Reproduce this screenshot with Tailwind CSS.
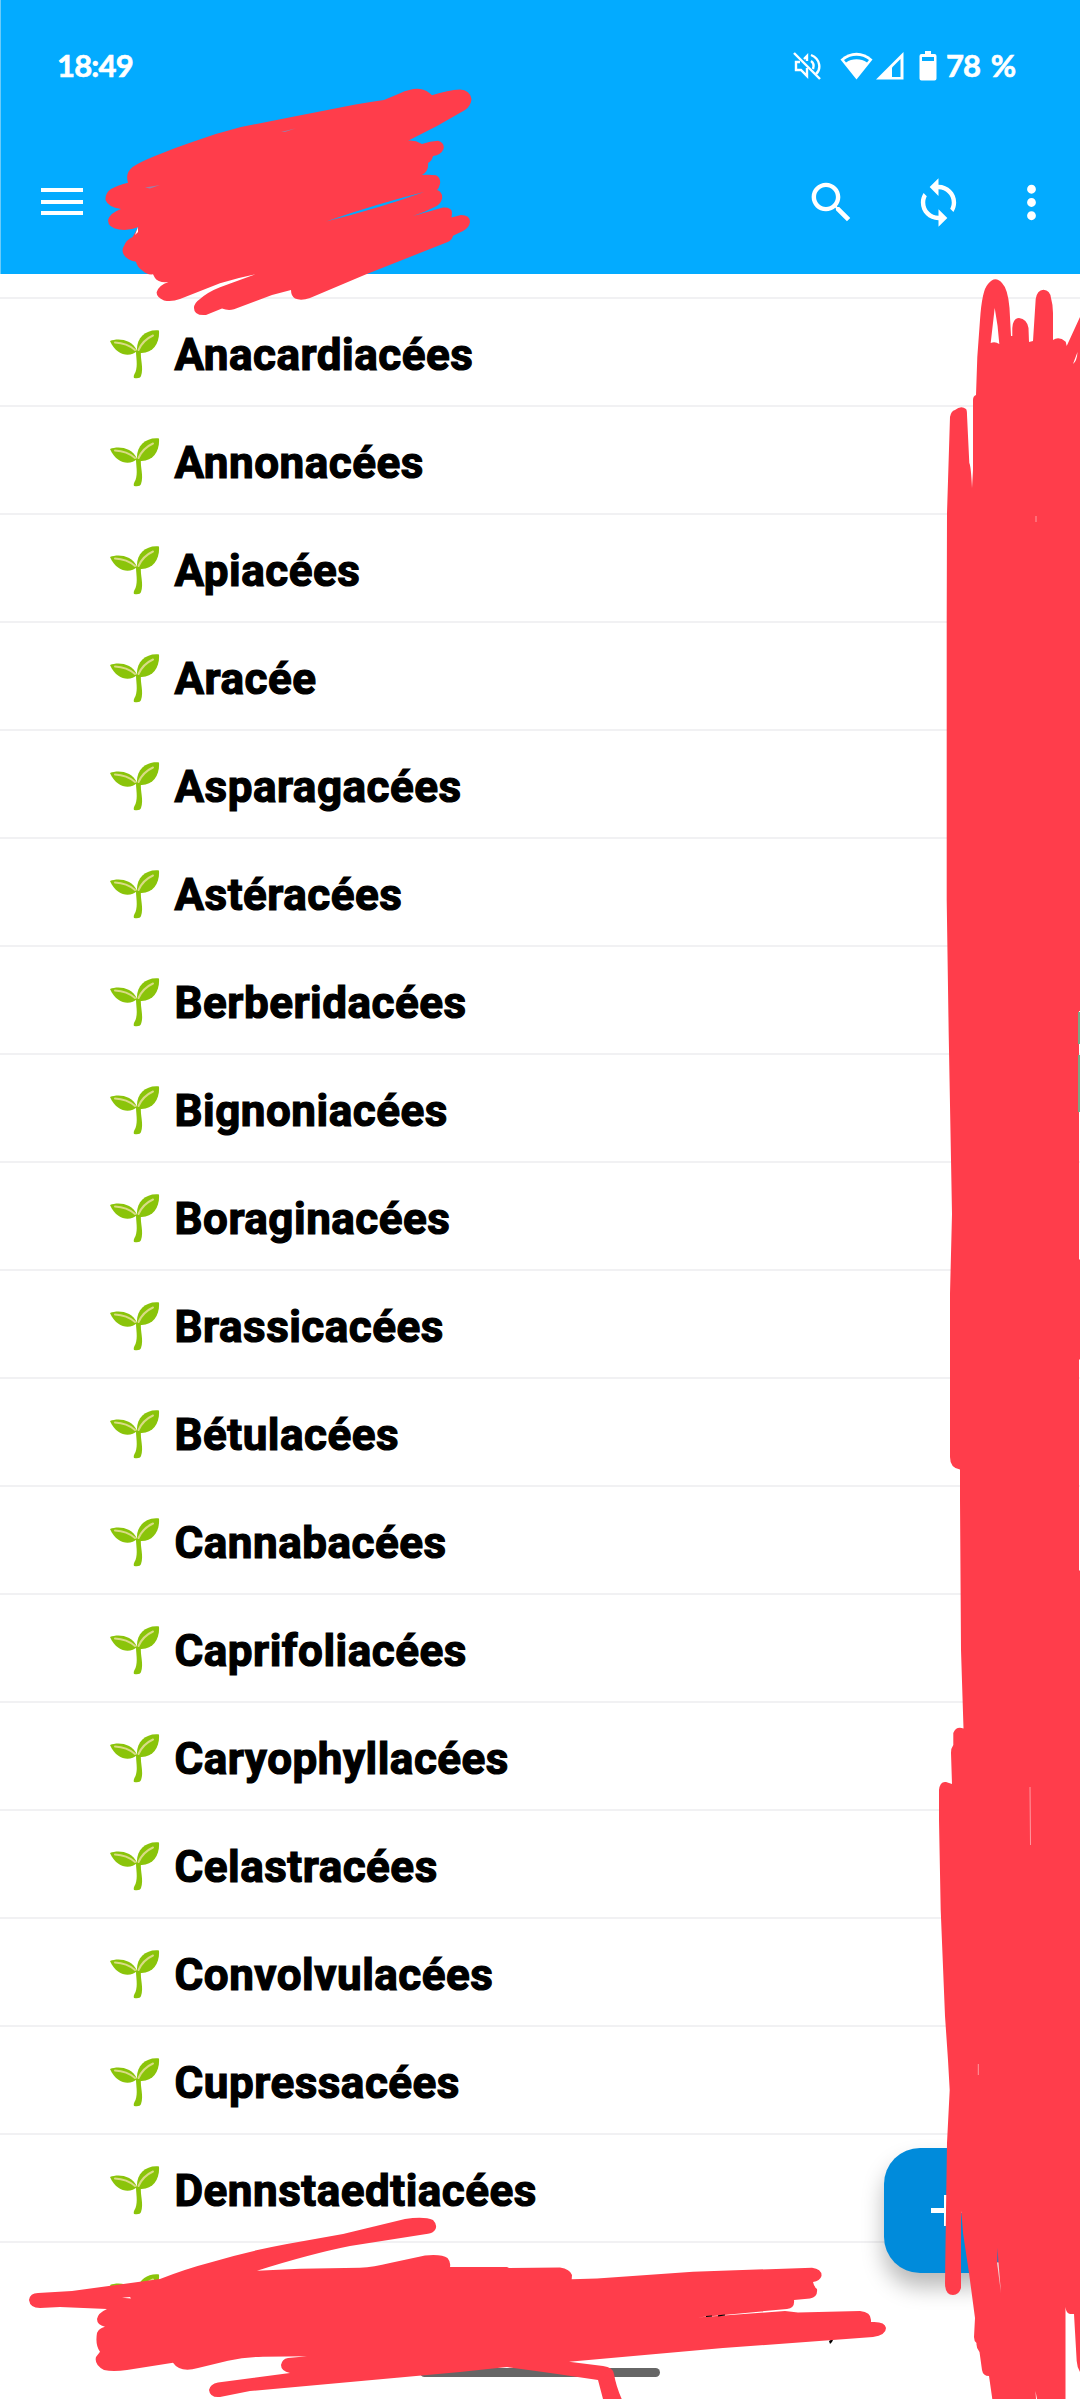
<!DOCTYPE html>
<html lang="fr">
<head>
  <meta charset="UTF-8" />
  <meta name="viewport" content="width=device-width, initial-scale=1" />
  <title>Familles</title>
  <script src="https://cdn.jsdelivr.net/npm/@tailwindcss/browser@4"></script>
</head>
<body class="bg-white">
  <div class="relative w-[1080px] h-[2399px] overflow-hidden bg-white flex flex-col font-[Roboto,sans-serif]">

    <header class="h-[274px] shrink-0 bg-[#03abff] text-white border-l border-[#6ccbf8] flex flex-col">
      <!-- Status bar -->
      <div class="h-[132px] pl-[56px] pr-[66px] flex items-center justify-between font-[Lato,sans-serif] font-bold text-[31px] leading-none">
        <span class="tracking-[-0.8px] -mt-[2px] [-webkit-text-stroke:0.6px_white]">18:49</span>
        <div class="flex items-center">
          <svg class="w-[28px] h-[28px] mr-[19px]" viewBox="0 0 28 28" fill="none" stroke="#fff" stroke-width="2.4">
            <path d="M1 1 L27 27" />
            <path d="M7 10 H3 V18 H8 L14 24 V16" />
            <path d="M11 7 L14 4 V9" />
            <path d="M18 3 C28 7 28 18 23 22" />
            <path d="M18 9 C21 11 21 14 20 17" />
          </svg>
          <svg class="w-[33px] h-[28px] mr-[3px]" viewBox="0 0 33 28">
            <path d="M16.500 27.500 L0.500 7.500 C10 -1.500 23 -1.500 32.500 7.500 Z" fill="#fff" />
            <path d="M4 8 C11 2.200 22 2.200 29 8 L27 10.500 C21 6.200 12 6.200 6 10.500 Z" fill="#03abff" />
          </svg>
          <svg class="w-[28px] h-[28px] mr-[15px]" viewBox="0 0 28 28">
            <path d="M0 27.500 L27.500 0 V27.500 Z" fill="#fff" />
            <path d="M16 15.500 L24.500 7 V25 H16 Z" fill="#03abff" />
          </svg>
          <svg class="w-[18px] h-[30px] mr-[9px]" viewBox="0 0 18 30">
            <path d="M6 0 H12 V3 H15.500 Q17.500 3 17.500 5 V27.500 Q17.500 29.500 15.500 29.500 H2.500 Q0.500 29.500 0.500 27.500 V5 Q0.500 3 2.500 3 H6 Z" fill="#fff" />
            <rect x="3" y="6" width="12" height="4" fill="#03abff" />
          </svg>
          <span class="w-[68px] whitespace-nowrap tracking-[-0.9px] [word-spacing:4px] -mt-[2px] [-webkit-text-stroke:0.6px_white]">78 %</span>
        </div>
      </div>

      <!-- Toolbar -->
      <div class="h-[142px] pl-[40px] pr-[22.5px] flex items-start justify-between">
        <div class="w-[42px] mt-[56px] flex flex-col gap-[7.5px]">
          <div class="h-1 bg-white"></div>
          <div class="h-1 bg-white"></div>
          <div class="h-1 bg-white"></div>
        </div>
        <div class="mt-[44px] flex">
          <svg class="w-[53px] h-[53px] mr-[54px]" viewBox="0 0 24 24" fill="#fff"><path d="M15.500 14h-.79l-.28-.27C15.410 12.590 16 11.110 16 9.500 16 5.910 13.090 3 9.500 3S3 5.910 3 9.500 5.910 16 9.500 16c1.610 0 3.090-.59 4.230-1.570l.27.28v.79l5 4.990L20.490 19l-4.990-5zm-6 0C7.010 14 5 11.990 5 9.500S7.010 5 9.500 5 14 7.010 14 9.500 11.990 14 9.500 14z" /></svg>
          <svg class="w-[53px] h-[53px] mr-[40px]" viewBox="0 0 24 24" fill="#fff"><path d="M12 4V1L8 5l4 4V6c3.310 0 6 2.690 6 6 0 1.010-.25 1.970-.7 2.800l1.460 1.460C19.540 15.030 20 13.570 20 12c0-4.420-3.580-8-8-8zm0 14c-3.310 0-6-2.690-6-6 0-1.010.25-1.970.7-2.800L5.240 7.740C4.460 8.970 4 10.430 4 12c0 4.420 3.580 8 8 8v3l4-4-4-4v3z" /></svg>
          <svg class="w-[53px] h-[53px]" viewBox="0 0 24 24" fill="#fff"><path d="M12 8c1.100 0 2-.9 2-2s-.9-2-2-2-2 .9-2 2 .9 2 2 2zm0 2c-1.100 0-2 .9-2 2s.9 2 2 2 2-.9 2-2-.9-2-2-2zm0 6c-1.100 0-2 .9-2 2s.9 2 2 2 2-.9 2-2-.9-2-2-2z" /></svg>
        </div>
      </div>
    </header>

    <div class="h-[25px] shrink-0 border-b-2 border-[#f1f1f3]"></div>
    <ul id="family-list"></ul>

    <!-- Add button -->
    <div class="absolute left-[884px] top-[2148px] w-[125px] h-[125px] rounded-[36px] bg-[#008bdb] shadow-[0_14px_22px_rgba(0,0,0,0.28)] flex items-center justify-center">
      <svg class="w-[31px] h-[31px]" viewBox="0 0 31 31"><path d="M0 15.500 H31 M15.500 0 V31" stroke="#fff" stroke-width="5" /></svg>
    </div>

    <!-- Gesture bar -->
    <div class="absolute left-[420px] top-[2368px] w-[240px] h-[9px] rounded-full bg-[#666]"></div>

    <!-- Marker strokes -->
    <svg class="absolute inset-0 w-[1080px] h-[2399px]" viewBox="0 0 1080 2399" fill="#ff3d4b">
      <path d="M829 2341 L834 2338 L832 2342 L830 2344 Z" fill="#000" />

      <path d="M132.600 167 Q140 162 155 156 Q174 148 193 141.700 Q217 133 241 127 L293 116.700 L344 106.700 Q368 102 384 100 L399.500 93.500 Q412 88 420 89 Q427 90 432 95.300 Q448 90 460 89.500 Q470 90 471.500 99 Q471 106 465 110 L437 126 L408 140.700 Q415 140 422 144 Q430 141 438 140.700 Q445 143 443.500 149 Q441 155 433 156 Q432 161 428 163 Q429 171 422 175 Q430 174.500 436 175.300 Q441 178 440 184 Q439 188 437 190 Q443 192 442 199 Q440 205 434.600 207 Q425 212 413 216 L443 207.500 Q452 207 452 213 L451.500 217.500 L461 215 Q470 215 470 222 Q469 228 463 231 L453 235.700 Q452 240 447.700 242 L365 274.700 L310 298 Q301 301 295 298.500 Q291 296 291 290 L272 295 L234 309.300 Q228 311 222 308.500 L206 315 Q194 316 194 308 Q194 303 200 299 Q208 292 220 287.300 L255.500 274.300 Q237 278 220 283.300 L180 299 Q172 302 164 300.500 Q156 297 156.700 292 Q159 285 168.500 282 Q158 283 155 278 L153 274.300 Q147 275 143 271 Q137 267 136 261.700 Q127 260 124 255 Q121 250 124 246 Q126 240 132.600 237 L138.400 227 Q129 231 119 229.500 Q108 228 108 220 Q110 213 121 209 Q108 207 105.500 200 Q105 193 111 189 Q118 185 128 182.700 Q125 173 132.600 167 Z" />
      <path d="M326 221.500 Q376 204 424 192 Q380 208 326 221.500 Z" fill="#03abff" />
      <path d="M281 132 L296 128.300 L285 132 Z M145 187.500 L160 185 L150 188.500 Z" fill="#9b7fa8" />
      <path d="M138 227 L135 235 L138 232 Z" fill="#fff" />

      <path fill-rule="evenodd" d="M946.700 900 V620 L947 513 L950 417 Q951 411 955 410 Q961 405 966 409 Q967 410 967 415 L969.300 463 Q971 466 972 488 L973 470 V400 Q973 396 976 395 L977.300 357 L980 320 Q982 290 988 284 Q995 275 1002 283 Q1008 289 1009.500 308 L1011 336 L1012.300 336 V328 Q1013 318 1019 318 Q1027 319 1028.500 328 L1029 342 L1033 341 L1035.700 299 Q1037 290 1043.500 289.700 Q1050 290 1051 298 Q1053 305 1053 313 V340 Q1059 336 1065.700 341.700 L1066.700 346 L1080 317 V1011 H1079 V1260 L1080 1259 V1359 L1079 1360 V1570 L1080 1571 V2372 Q1077 2367 1076.700 2361 L1074 2314 H1070 Q1066 2313 1065.500 2307 V2399 H1037 L1035.500 2391 L1036 2399 H992.300 L989 2376 Q983 2376 982 2370 L979.500 2352 Q976 2348 976.500 2343 Q974 2341 974 2337 L975 2318 L969 2273 L963 2233 Q962 2218 961 2211 V2288 Q959 2295 953 2295 Q945 2295 945 2283 L946 2210 L947 2143 L949.700 2090 L948 2060 L945 2016 L940.700 1910 L939 1820 V1790 Q940 1781 946 1782 L952 1784 L951 1753 Q951 1748 953.300 1745 V1733 Q956 1726 963.500 1728.500 L961 1650 L960 1500 V1469.500 Q950 1468 950 1457 V1294 L952 1214 L948.700 1034 Z M994.700 308 L990.700 343 Q995 341 999.300 344 Q998 325 994.700 308 Z M1077.500 352 L1073 364 Q1077 361 1077.500 352 Z" />
      <path d="M1079 1012 V1044 M1079 1055 V1112" stroke="#79a885" stroke-width="2" />
      <path d="M1030 1787 L1030.500 1845 M978.300 2064 V2075 M1036 516 V522" stroke="#ff9aa0" stroke-width="1" />
      <path d="M997.500 2248 L997 2262 L998.500 2262.500 Z" fill="#4a6bab" />
      <path d="M997 2262.500 H998.500 L1001 2293 Z" fill="#eedada" />

      <path d="M29 2300 Q30 2293 38 2293 L72 2291 L160 2279 Q185 2269 213 2261.700 Q249 2251 287 2244 L343 2234 L405 2219 Q424 2216 433 2220 Q438 2225 435 2230 Q433 2233 428 2233.700 L350 2246 Q310 2254 257 2270.700 L300 2268.700 L360 2267.700 Q374 2267 390 2263 L425 2255.500 Q442 2254 447.500 2258 Q451 2262 450 2267 L507 2267 L509 2268 L560 2267.500 Q570 2269 572 2275 L571.700 2279.300 L597 2278.500 L693 2271.700 L812 2267.700 Q822 2269 821.500 2276 Q820 2281 813 2282 Q814 2287 817 2289 Q818 2297 810 2298.500 L794 2300 Q795 2308 787 2309 L697 2317.500 L785 2311 L798 2312.500 L860 2311 Q871 2312 871 2320 V2322 Q885 2321 886 2328 Q886 2335 873 2337 L723 2348 L569 2361.700 L603 2366 Q613 2367 614 2374 Q616 2386 621.700 2399 H603 L598 2380 Q560 2374 507 2367 L460 2372 L250 2391 L220 2397 Q210 2398 209 2390 Q210 2384 218 2382.500 L290 2373 Q281 2371 281 2365 Q282 2359 288 2358 L307 2356.300 L263 2356.700 Q245 2357 228 2360.700 L198 2368 Q180 2373 173 2362.700 L127 2370 Q113 2372 104 2370 Q94 2365 96 2357 L100 2351.700 Q95 2345 97 2333 Q99 2328 105 2326.700 Q97 2325 97 2319 Q98 2313 107 2309 L60 2307 L40 2308 Q30 2308 29 2300 Z" />
      <path d="M122 2297.800 L130 2297 L131 2298.500 Z" fill="#fff" />
      <path d="M706 2316.500 L712 2316 M718 2315.800 L725 2315" stroke="#000" stroke-width="1.200" />
    </svg>
  </div>

  <script>
    const families = [
      'Anacardiacées', 'Annonacées', 'Apiacées', 'Aracée', 'Asparagacées', 'Astéracées',
      'Berberidacées', 'Bignoniacées', 'Boraginacées', 'Brassicacées', 'Bétulacées',
      'Cannabacées', 'Caprifoliacées', 'Caryophyllacées', 'Celastracées',
      'Convolvulacées', 'Cupressacées', 'Dennstaedtiacées', ''
    ];

    document.getElementById('family-list').innerHTML = families.map(name => `
      <li class="h-[108px] pl-[110px] pt-[5px] flex items-center gap-[14.5px] border-b-2 border-[#f1f1f3] last:border-transparent">
        <svg class="w-[50px] h-[49px] shrink-0" viewBox="0 0 50 49">
          <path d="M26 21 H31 C30 29 34 38 31 46 Q30 49 24 48 Q23 46 25.500 42 C28 35 26 28 26 21 Z" fill="#8ac40a" />
          <path d="M0 11 C8 8 22 9 27 21 C21 27 7 27 0 11 Z" fill="#8ac40a" />
          <path d="M27 21 C26 8 36 -1 49 0.500 C50 13 43 24 30 23 Z" fill="#8ac40a" />
          <path d="M5 12.500 Q17 13 25 20 M28.500 20 Q33 10 43 5.500" fill="none" stroke="#d9dc86" stroke-width="2" stroke-linecap="round" />
        </svg>
        <span class="text-[44px] font-bold text-black leading-none tracking-[0.5px] [-webkit-text-stroke:1.2px_black]">${name}</span>
      </li>
    `).join('');
  </script>
</body>
</html>
